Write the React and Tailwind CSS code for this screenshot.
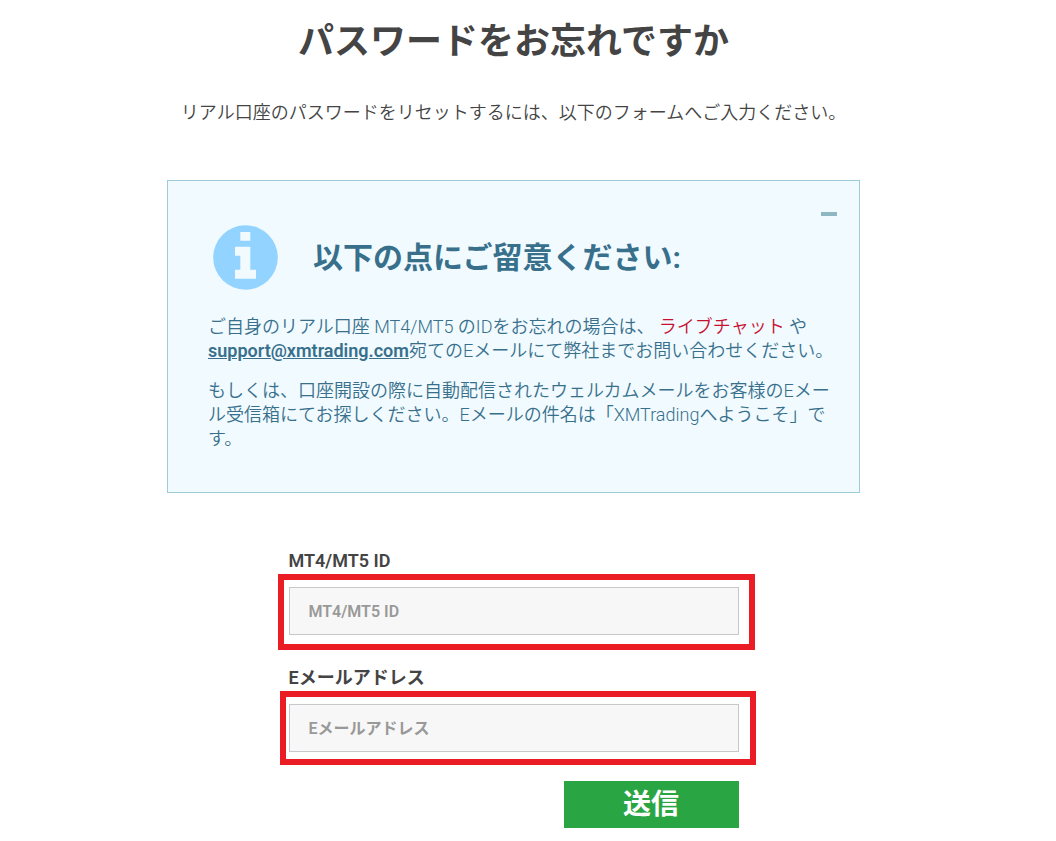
function InfoIcon() {
  return (
    <svg className="size-[65px] shrink-0" viewBox="0 0 65 65" aria-hidden="true">
      <circle cx="32.5" cy="32.5" r="32.3" fill="#92d3ff" />
      <path fill="#f0faff" d="M27.3 7h10v8.7h-10zM22 21.7h15.3v23H43v9H22v-9h5.3v-14H22z" />
    </svg>
  );
}

function Field({ id, type, label, frame }) {
  return (
    <div className="flex flex-col gap-3">
      <label htmlFor={id} className="text-lg leading-7 font-semibold">
        {label}
      </label>
      <div className="relative">
        <input
          id={id}
          type={type}
          placeholder={label}
          className="block h-12 w-full border border-[#c8c8cc] bg-[#f7f7f7] px-[19px] text-base font-semibold text-[#444] outline-none placeholder:text-[#999]"
        />
        <span className={`pointer-events-none absolute border-6 border-[#ea1d25] ${frame}`} />
      </div>
    </div>
  );
}

export default function App() {
  return (
    <main className="flex min-h-screen flex-col items-center bg-white pr-[29px] pb-3 font-['Roboto','Noto_Sans_CJK_JP',sans-serif] text-[#444]">
      <h1 className="mt-[18px] text-center text-4xl leading-[48px] font-bold">パスワードをお忘れですか</h1>
      <p className="mt-[35px] text-center text-lg leading-6 font-[350]">
        リアル口座のパスワードをリセットするには、以下のフォームへご入力ください。
      </p>

      <section className="mt-[55px] w-full max-w-[693px] border border-[#9ccbd9] bg-[#f0faff] pt-[31px] pr-[22px] pb-[41px] pl-10 text-[#38708c]">
        <div className="flex justify-end">
          <button type="button" aria-label="閉じる" className="h-1 w-4 bg-[#8fb7c2]" />
        </div>
        <div className="mt-[9px] flex items-center gap-[35px] pl-[5px]">
          <InfoIcon />
          <h2 className="text-3xl leading-10 font-bold">以下の点にご留意ください:</h2>
        </div>
        <div className="mt-[25px] flex flex-col gap-4 text-lg leading-6 font-[350]">
          <p>
            ご自身のリアル口座 MT4/MT5 のIDをお忘れの場合は、{" "}
            <a href="#chat" className="text-[#c8102e]">ライブチャット</a> や
            <br />
            <a href="mailto:support@xmtrading.com" className="font-semibold underline">support@xmtrading.com</a>
            宛てのEメールにて弊社までお問い合わせください。
          </p>
          <p>
            もしくは、口座開設の際に自動配信されたウェルカムメールをお客様のEメー
            <br />
            ル受信箱にてお探しください。Eメールの件名は「XMTradingへようこそ」で
            <br />
            す。
          </p>
        </div>
      </section>

      <form className="mt-[54px] flex w-full max-w-[450px] flex-col gap-[29px]" onSubmit={(e) => e.preventDefault()}>
        <Field id="account" type="text" label="MT4/MT5 ID" frame="-top-[13px] -right-4 -bottom-[15px] -left-[11px]" />
        <Field id="email" type="email" label="Eメールアドレス" frame="-top-[13px] -right-[17px] -bottom-[13px] -left-[9px]" />
        <button type="submit" className="h-[47px] w-[175px] self-end bg-[#2aa543] text-[28px] leading-10 font-bold text-white">
          送信
        </button>
      </form>
    </main>
  );
}
